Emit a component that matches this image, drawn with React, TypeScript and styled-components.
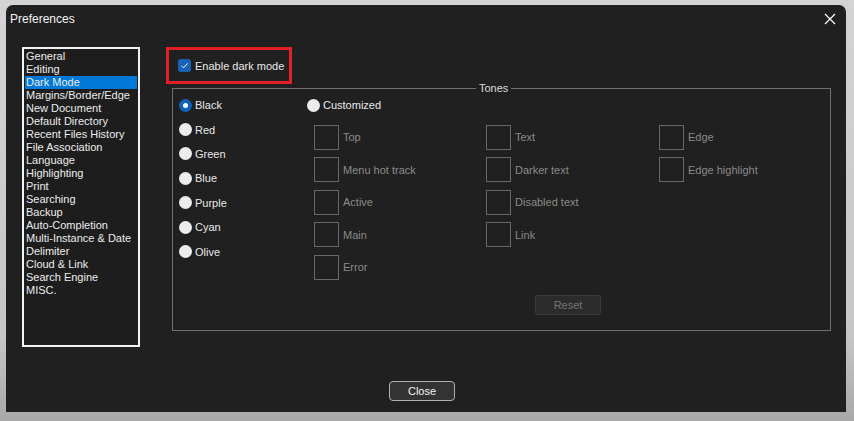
import React from "react";
import styled, { createGlobalStyle } from "styled-components";

const Global = createGlobalStyle`
  html, body { margin: 0; padding: 0; }
  body { background: #cbcbcb; font-family: "Liberation Sans", Arial, sans-serif; }
  * { box-sizing: border-box; }
`;

const Desk = styled.div`
  width: 854px;
  height: 421px;
  padding: 5px 8px 9px 6px;
  background: linear-gradient(#d4d4d4, #c6c6c6 80%, #a8a8a8);
`;

const Win = styled.div`
  width: 840px;
  height: 407px;
  background: #202020;
  border-radius: 7px 7px 0 0;
  display: flex;
  flex-direction: column;
  color: #fff;
`;

const TitleBar = styled.div`
  height: 28px;
  display: flex;
  align-items: center;
  justify-content: space-between;
  padding: 0 10px 0 4px;
  font-size: 12px;
  color: #f4f4f4;
`;

const CloseX = styled.div`
  width: 12px;
  height: 12px;
  display: flex;
`;

const Body = styled.div`
  display: flex;
  padding: 14px 0 0 16px;
`;

const List = styled.ul`
  list-style: none;
  margin: 0;
  padding: 1px 1px;
  width: 118px;
  height: 300px;
  border: 2px solid #f2f2f2;
  background: #1d1d1d;
`;

const Item = styled.li<{ $sel?: boolean }>`
  height: 13px;
  line-height: 13px;
  font-size: 11px;
  padding-left: 1px;
  color: #ececec;
  white-space: nowrap;
  background: ${(p) => (p.$sel ? "#0078d7" : "transparent")};
`;

const Right = styled.div`
  display: flex;
  flex-direction: column;
  margin-left: 26px;
`;

const Highlight = styled.div`
  width: 126px;
  height: 37px;
  border: 3px solid #e3202a;
  display: flex;
  align-items: center;
  padding-left: 9px;
  gap: 4px;
  font-size: 11px;
  color: #e8e8e8;
  white-space: nowrap;
`;

const CheckBox = styled.div`
  width: 13px;
  height: 13px;
  border-radius: 3px;
  background: #1862b8;
  display: flex;
  align-items: center;
  justify-content: center;
`;

const Group = styled.div`
  margin: 4px 0 0 6px;
  width: 659px;
  height: 243px;
  border: 1px solid #6f6f6f;
  padding: 0 0 0 6px;
  display: flex;
  position: relative;
`;

const Legend = styled.span`
  position: absolute;
  top: -8px;
  left: 303px;
  padding: 0 3px;
  font-size: 11px;
  line-height: 14px;
  color: #dcdcdc;
  background: #202020;
`;

const RadioCol = styled.div`
  display: flex;
  flex-direction: column;
  width: 128px;
  padding-top: 4px;
`;

const RadioRow = styled.div`
  height: 24.4px;
  display: flex;
  align-items: center;
  gap: 3px;
  font-size: 11px;
  color: #e8e8e8;
`;

const RadioDot = styled.div<{ $on?: boolean }>`
  width: 13px;
  height: 13px;
  border-radius: 50%;
  background: ${(p) => (p.$on ? "#0e63b8" : "#ececec")};
  display: flex;
  align-items: center;
  justify-content: center;
  &::after {
    content: "";
    width: 5px;
    height: 5px;
    border-radius: 50%;
    background: #fff;
    display: ${(p) => (p.$on ? "block" : "none")};
  }
`;

const Custom = styled.div`
  display: flex;
  flex-direction: column;
  padding-top: 4px;
`;

const SwatchGrid = styled.div`
  display: grid;
  grid-template-columns: 172px 173px 150px;
  grid-template-rows: repeat(5, 25px);
  row-gap: 7.5px;
  margin: 7.5px 0 0 7px;
`;

const Swatch = styled.div<{ $col: number; $row: number }>`
  grid-column: ${(p) => p.$col};
  grid-row: ${(p) => p.$row};
  display: flex;
  align-items: center;
  gap: 4px;
  font-size: 11px;
  color: #8a8a8a;
`;

const SwatchBox = styled.div`
  width: 25px;
  height: 25px;
  border: 1px solid #686868;
`;

const ResetBtn = styled.button`
  margin: 15px 0 0 228px;
  width: 66px;
  height: 20px;
  border: 1px solid #3a3a3a;
  border-radius: 3px;
  background: #2b2b2b;
  color: #767676;
  font-family: inherit;
  font-size: 11px;
  padding: 0;
`;

const Footer = styled.div`
  display: flex;
  justify-content: center;
  padding: 0 8px 0 0;
  margin-top: auto;
  margin-bottom: 11px;
`;

const CloseBtn = styled.button`
  width: 66px;
  height: 20px;
  border: 1px solid #b0b0b0;
  border-radius: 4px;
  background: #333;
  color: #f4f4f4;
  font-family: inherit;
  font-size: 11px;
  padding: 0;
`;

const items = [
  "General",
  "Editing",
  "Dark Mode",
  "Margins/Border/Edge",
  "New Document",
  "Default Directory",
  "Recent Files History",
  "File Association",
  "Language",
  "Highlighting",
  "Print",
  "Searching",
  "Backup",
  "Auto-Completion",
  "Multi-Instance & Date",
  "Delimiter",
  "Cloud & Link",
  "Search Engine",
  "MISC.",
];

const tones = ["Black", "Red", "Green", "Blue", "Purple", "Cyan", "Olive"];

const swatches: [string, number, number][] = [
  ["Top", 1, 1],
  ["Menu hot track", 1, 2],
  ["Active", 1, 3],
  ["Main", 1, 4],
  ["Error", 1, 5],
  ["Text", 2, 1],
  ["Darker text", 2, 2],
  ["Disabled text", 2, 3],
  ["Link", 2, 4],
  ["Edge", 3, 1],
  ["Edge highlight", 3, 2],
];

export default function App() {
  return (
    <Desk>
      <Global />
      <Win>
        <TitleBar>
          <span>Preferences</span>
          <CloseX>
            <svg width="12" height="12" viewBox="0 0 12 12">
              <path d="M1 1L11 11M11 1L1 11" stroke="#fff" strokeWidth="1.2" />
            </svg>
          </CloseX>
        </TitleBar>
        <Body>
          <List>
            {items.map((t) => (
              <Item key={t} $sel={t === "Dark Mode"}>
                {t}
              </Item>
            ))}
          </List>
          <Right>
            <Highlight>
              <CheckBox>
                <svg width="9" height="9" viewBox="0 0 9 9">
                  <path d="M1.5 4.8L3.5 6.8L7.6 2.4" stroke="#fff" strokeWidth="1" fill="none" />
                </svg>
              </CheckBox>
              <span>Enable dark mode</span>
            </Highlight>
            <Group>
              <Legend>Tones</Legend>
              <RadioCol>
                {tones.map((t, i) => (
                  <RadioRow key={t}>
                    <RadioDot $on={i === 0} />
                    <span>{t}</span>
                  </RadioRow>
                ))}
              </RadioCol>
              <Custom>
                <RadioRow>
                  <RadioDot />
                  <span>Customized</span>
                </RadioRow>
                <SwatchGrid>
                  {swatches.map(([t, c, r]) => (
                    <Swatch key={t} $col={c} $row={r}>
                      <SwatchBox />
                      <span>{t}</span>
                    </Swatch>
                  ))}
                </SwatchGrid>
                <ResetBtn>Reset</ResetBtn>
              </Custom>
            </Group>
          </Right>
        </Body>
        <Footer>
          <CloseBtn>Close</CloseBtn>
        </Footer>
      </Win>
    </Desk>
  );
}
